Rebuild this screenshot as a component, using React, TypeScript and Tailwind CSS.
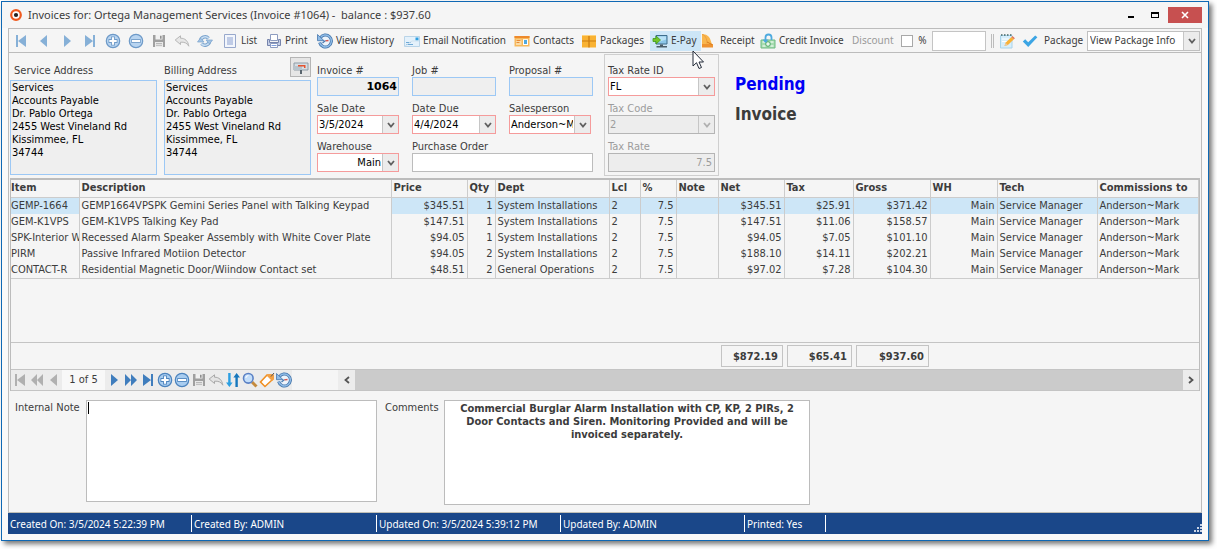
import type { ReactNode } from "react";

type IconName =
  | "first" | "prevPage" | "prev" | "next" | "nextPage" | "last" | "plus" | "minus" | "save" | "undo"
  | "refresh" | "list" | "print" | "history" | "mail" | "contacts" | "packages" | "epay" | "receipt"
  | "credit" | "edit" | "check" | "sort" | "search" | "tag" | "mailbox";

const icons: Record<IconName, ReactNode> = {
  first: <path d="M3 2h2v12H3zM13 2v12L5 8z" fill="currentColor" />,
  prevPage: <path d="M8 2v12L2 8zM14 2v12L8 8z" fill="currentColor" />,
  prev: <path d="M11 2v12L4 8z" fill="currentColor" />,
  next: <path d="M5 2v12l7-6z" fill="currentColor" />,
  nextPage: <path d="M2 2v12l6-6zM8 2v12l6-6z" fill="currentColor" />,
  last: <path d="M3 2v12l8-6zM11 2h2v12h-2z" fill="currentColor" />,
  plus: (
    <>
      <circle cx="8" cy="8" r="6.7" fill="#a9cdf0" stroke="#4c83bd" strokeWidth="1.2" />
      <path d="M8 3.5v9M3.5 8h9" stroke="#4c83bd" strokeWidth="4" />
      <path d="M8 4.3v7.4M4.3 8h7.4" stroke="#fff" strokeWidth="2.2" />
    </>
  ),
  minus: (
    <>
      <circle cx="8" cy="8" r="6.7" fill="#a9cdf0" stroke="#4c83bd" strokeWidth="1.2" />
      <path d="M3.3 8h9.4" stroke="#4c83bd" strokeWidth="4" />
      <path d="M4 8h8" stroke="#fff" strokeWidth="2.2" />
    </>
  ),
  save: (
    <>
      <path d="M2 2h12v12H2z" fill="#8c8c8c" />
      <path d="M4.5 2h7v4.5h-7z" fill="#f2f2f2" />
      <path d="M9 2.8h1.6v3H9z" fill="#777" />
      <path d="M4 9h8v5H4z" fill="#e8e8e8" />
      <path d="M5 10.5h6M5 12.3h6" stroke="#aaa" />
    </>
  ),
  undo: <path d="M1.2 7 6.5 2.8v2.4c4.5 0 7.5 2.6 8.3 8-1.6-3.2-4.4-4.3-8.3-4v2.3z" fill="#e4e4e4" stroke="#a8a8a8" />,
  refresh: (
    <>
      <path d="M3.5 8.500a4.600 4.600 0 0 1 8-3.200M12.500 7.500a4.600 4.600 0 0 1-8 3.200" fill="none" stroke="#5b8fc4" strokeWidth="3.400" />
      <path d="M3.500 8.500a4.600 4.600 0 0 1 8-3.200M12.500 7.500a4.600 4.600 0 0 1-8 3.200" fill="none" stroke="#c3dcf4" strokeWidth="1.600" />
      <path d="M9 7l6.500 0L12.500 11zM7 9H.500L3.500 5z" fill="#8fb8e0" stroke="#5b8fc4" strokeWidth=".7" />
    </>
  ),
  list: (
    <>
      <path d="M2.500 1.500h11v13h-11z" fill="#f3f6fc" stroke="#98a8cc" />
      <path d="M5 5h6M5 7h6M5 9h6M5 11h6" stroke="#8ba0d0" />
    </>
  ),
  print: (
    <>
      <path d="M4.500 1.500h7v6h-7z" fill="#fff" stroke="#8d9cc0" />
      <path d="M1.500 6.500h2v3h9v-3h2v6h-13z" fill="#c4cee6" stroke="#7684ac" />
      <path d="M4.500 10.500h7v4h-7z" fill="#fff" stroke="#8d9cc0" />
      <path d="M5.500 12.500h5" stroke="#7d9fe0" />
    </>
  ),
  history: (
    <>
      <path d="M3.200 5a6 6 0 1 1-.6 4.500" fill="#edf4fb" stroke="#4576ac" strokeWidth="3" />
      <path d="M3.200 5a6 6 0 1 1-.6 4.500" fill="none" stroke="#8fbbe6" strokeWidth="1.400" />
      <path d="M.500 1.500v6.200h6.500z" fill="#8fbbe6" stroke="#4576ac" strokeWidth=".8" />
      <path d="M5.500 10l3-2.500" fill="none" stroke="#4779b0" strokeWidth="1.200" />
      <path d="M8.500 7.800l3-.300" stroke="#d9534a" strokeWidth="1.300" />
    </>
  ),
  mail: (
    <>
      <path d="M.500 3.500h15v10H.500z" fill="#e4f1fb" stroke="#b9d4e8" />
      <path d="M11.500 4.500h3v3h-3z" fill="#2f9fe0" />
      <path d="M2 9.500h5M2 11.500h7" stroke="#6fa9d6" />
      <path d="M1 13l7-5h7" fill="none" stroke="#cfe2ef" />
    </>
  ),
  contacts: (
    <>
      <path d="M.500 3h15v10.500H.500z" fill="#f7b95c" />
      <path d="M.500 3h15v2H.500z" fill="#ee8a2c" />
      <path d="M2 6.500h5.500v5.500H2z" fill="#fbdca6" />
      <path d="M2.500 7.500h4M2.500 9.500h3" stroke="#e98b38" />
      <path d="M9 6.200h5V12H9z" fill="#fff" />
      <path d="M10 7h3v4h-3z" fill="#4fa9e0" />
    </>
  ),
  packages: (
    <>
      <path d="M1 2h14v12.500H1z" fill="#f9b233" />
      <path d="M1 8h14M8 2v12.500" stroke="#c97a10" strokeWidth="1.200" />
      <path d="M1 2.500h14" stroke="#ffd37c" />
    </>
  ),
  epay: (
    <>
      <path d="M4 2.500h11v8.500H4z" fill="#8cc6e8" stroke="#3f6d8c" />
      <path d="M5 3.500h9v3l-9 3z" fill="#b9e1f6" />
      <path d="M8 11.500h3V13H8zM4.500 13h10.500v1.500H4.500z" fill="#4b5d68" />
      <path d="M1 5.500h3V3l4.500 4L4 11V8.500H1z" fill="#74c52a" stroke="#3d9c16" strokeWidth=".8" />
    </>
  ),
  receipt: (
    <>
      <path d="M1 1.500c4-1 8 2 9 7l1 3H1z" fill="#f9b64e" />
      <path d="M1 1.500c3 0 5 4 5 9" fill="none" stroke="#eda040" />
      <path d="M1 11h11v3.500H1z" fill="#ee9331" />
      <path d="M6 9l5 2.500" stroke="#d67b1f" />
    </>
  ),
  credit: (
    <>
      <path d="M1 7h14v8H1z" fill="#a6dcb0" stroke="#6fbb82" />
      <path d="M2.500 9h3M10.500 9h3M2.500 13h3M10.500 13h3" stroke="#fff" />
      <circle cx="8" cy="11" r="2.300" fill="#e9f8ec" stroke="#4fa768" />
      <path d="M5.500 9V4.500a3 3 0 0 1 6 0V7" fill="none" stroke="#4daadf" strokeWidth="1.800" />
      <path d="M2.500 6.500h6L5.500 10z" fill="#4daadf" />
    </>
  ),
  edit: (
    <>
      <path d="M1.500 2.500h11.500v12.500H1.500z" fill="#d6eefb" stroke="#a9d4ea" />
      <path d="M2 2h1.500M5 2h1.500M8 2h1.500M11 2h1.500" stroke="#466" strokeWidth="1.600" />
      <path d="M3 6h7M3 8.500h5" stroke="#fff" />
      <path d="M5.500 13l1-3.200L12.500 4l2.400 2.300-6 5.800z" fill="#f9b237" />
      <path d="M12.500 4l1-1 2.400 2.300-1 1z" fill="#e36f51" />
      <path d="M5.500 13l1-3.200 2.400 2.300z" fill="#e9c9a0" />
    </>
  ),
  check: <path d="M.800 8.500l2.400-2.300 3 3L13.200 2.500l2.200 1.700L6.200 14z" fill="#3ca5e4" />,
  sort: (
    <>
      <path d="M3.200 1h2.400v9.500h2L4.400 15 1 10.500h2.200z" fill="#2b9fe2" />
      <path d="M10.400 15h2.400V5.500h2.200L11.600 1 8.400 5.500h2z" fill="#1677bd" />
    </>
  ),
  search: (
    <>
      <path d="M10 10l4.500 4.500" stroke="#c48a3d" strokeWidth="3" />
      <circle cx="6.300" cy="6.300" r="4.800" fill="#c3defa" stroke="#5a80c4" strokeWidth="1.600" />
      <path d="M3.800 6a2.600 2.600 0 0 1 2.600-2.400" fill="none" stroke="#fff" />
    </>
  ),
  tag: (
    <>
      <path d="M1.500 10L8 3h5v5l-7 6.500z" fill="#fff" stroke="#ef8f22" strokeWidth="1.600" />
      <path d="M9 2.500h6v5l-2 1.500-5-5z" fill="#f3a043" />
      <path d="M12 4.500l3-3.500" stroke="#555" />
    </>
  ),
  mailbox: (
    <>
      <path d="M1 4h14v7H1z" fill="#d5dde3" stroke="#8f9ca6" />
      <path d="M1 7h8v4H1z" fill="#b7c4cd" />
      <path d="M5 6h7.500v3H11V7.500H5z" fill="#e5532e" />
      <path d="M7 11h2v4H7z" fill="#59656e" />
    </>
  ),
};

function Icon({ name, className = "" }: { name: IconName; className?: string }) {
  return (
    <svg viewBox="0 0 16 16" className={`size-4 shrink-0 ${className}`} aria-hidden="true">
      {icons[name]}
    </svg>
  );
}

function Chevron() {
  return (
    <svg viewBox="0 0 8 8" className="size-2" aria-hidden="true">
      <path d="M1 2l3 3.500L7 2" fill="none" stroke="currentColor" strokeWidth="1.800" />
    </svg>
  );
}

const navButtons: [IconName, string][] = [
  ["first", "First"], ["prev", "Previous"], ["next", "Next"], ["last", "Last"],
  ["plus", "Add"], ["minus", "Delete"], ["save", "Save"], ["undo", "Undo"], ["refresh", "Refresh"],
];

const actions: { icon: IconName; label: string; width: string; active?: boolean }[] = [
  { icon: "list", label: "List", width: "w-[44px]" },
  { icon: "print", label: "Print", width: "w-[51px]" },
  { icon: "history", label: "View History", width: "w-[87px]" },
  { icon: "mail", label: "Email Notification", width: "w-[110px]" },
  { icon: "contacts", label: "Contacts", width: "w-[67px]" },
  { icon: "packages", label: "Packages", width: "w-[69px]" },
  { icon: "epay", label: "E-Pay", width: "w-[51px]", active: true },
  { icon: "receipt", label: "Receipt", width: "w-[59px]" },
  { icon: "credit", label: "Credit Invoice", width: "w-[92px]" },
];

const columns = [
  { label: "Item", width: "w-[68px]" },
  { label: "Description", width: "w-[312px]" },
  { label: "Price", width: "w-[76px]", right: true },
  { label: "Qty", width: "w-[28px]", right: true },
  { label: "Dept", width: "w-[114px]" },
  { label: "Lcl", width: "w-[31px]" },
  { label: "%", width: "w-[36px]", right: true },
  { label: "Note", width: "w-[42px]" },
  { label: "Net", width: "w-[66px]", right: true },
  { label: "Tax", width: "w-[69px]", right: true },
  { label: "Gross", width: "w-[77px]", right: true },
  { label: "WH", width: "w-[67px]", right: true },
  { label: "Tech", width: "w-[100px]" },
  { label: "Commissions to", width: "" },
];

const rows = [
  ["GEMP-1664", "GEMP1664VPSPK Gemini Series Panel with Talking Keypad", "$345.51", "1", "System Installations", "2", "7.5", "", "$345.51", "$25.91", "$371.42", "Main", "Service Manager", "Anderson~Mark"],
  ["GEM-K1VPS", "GEM-K1VPS Talking Key Pad", "$147.51", "1", "System Installations", "2", "7.5", "", "$147.51", "$11.06", "$158.57", "Main", "Service Manager", "Anderson~Mark"],
  ["SPK-Interior W", "Recessed Alarm Speaker Assembly with White Cover Plate", "$94.05", "1", "System Installations", "2", "7.5", "", "$94.05", "$7.05", "$101.10", "Main", "Service Manager", "Anderson~Mark"],
  ["PIRM", "Passive Infrared Motiion Detector", "$94.05", "2", "System Installations", "2", "7.5", "", "$188.10", "$14.11", "$202.21", "Main", "Service Manager", "Anderson~Mark"],
  ["CONTACT-R", "Residential Magnetic Door/Wiindow Contact set", "$48.51", "2", "General Operations", "2", "7.5", "", "$97.02", "$7.28", "$104.30", "Main", "Service Manager", "Anderson~Mark"],
];

const address = "Services\nAccounts Payable\nDr. Pablo Ortega\n2455 West Vineland Rd\nKissimmee, FL\n34744";

const status = [
  { text: "Created On: 3/5/2024 5:22:39 PM", width: "w-[184px]" },
  { text: "Created By: ADMIN", width: "w-[185px]" },
  { text: "Updated On: 3/5/2024 5:39:12 PM", width: "w-[184px]" },
  { text: "Updated By: ADMIN", width: "w-[184px]" },
  { text: "Printed: Yes", width: "w-[81px]" },
];

const pagerLeft: [IconName, string][] = [["first", "First row"], ["prevPage", "Previous page"], ["prev", "Previous row"]];
const pagerRight: [IconName, string, string][] = [
  ["next", "Next row", "text-[#3f7dbd]"],
  ["nextPage", "Next page", "text-[#3f7dbd]"],
  ["last", "Last row", "text-[#3f7dbd]"],
  ["plus", "Add row", ""],
  ["minus", "Delete row", ""],
  ["save", "Save row", "opacity-80"],
  ["undo", "Undo row", ""],
  ["sort", "Sort", ""],
  ["search", "Search", ""],
  ["tag", "Clear filter", ""],
  ["history", "Row history", ""],
];

function Field({ id, label, children, className = "" }: { id: string; label: string; children: ReactNode; className?: string }) {
  return (
    <div className={`flex flex-col ${className}`}>
      <label htmlFor={id} className="h-[15px] leading-[17px] whitespace-nowrap">{label}</label>
      {children}
    </div>
  );
}

function Select({ id, value, className = "", right, disabled }: { id: string; value: string; className?: string; right?: boolean; disabled?: boolean }) {
  return (
    <div className={`flex h-[19px] border ${disabled ? "border-[#b5b5b5] bg-[#ededed] text-[#9c9c9c]" : "border-[#f59b9b] bg-white text-black"} ${className}`}>
      <select id={id} disabled={disabled} className={`min-w-0 flex-1 appearance-none px-px pt-px opacity-100 outline-none ${right ? "text-right" : ""}`}>
        <option>{value}</option>
      </select>
      <span className={`pointer-events-none flex w-4 shrink-0 items-center justify-center border-l border-[#c6c6c6] bg-[#ececec] ${disabled ? "text-[#b0b0b0]" : "text-[#606060]"}`}>
        <Chevron />
      </span>
    </div>
  );
}

export default function App() {
  return (
    <div className="bg-white pt-px pr-2 pb-2 pl-px font-['DejaVu_Sans_Condensed','DejaVu_Sans',sans-serif] text-[11px] text-[#3c3c3c]">
      <div className="border border-[#0f68b4] bg-[#f9f9f9] shadow-[3px_3px_5px_#777]">
        <header className="flex h-[26px] items-center bg-[#f5f5f5] pl-2 font-['Noto_Sans',sans-serif]">
          <svg viewBox="0 0 12 12" className="mr-1.5 size-3 shrink-0" aria-hidden="true">
            <circle cx="6" cy="6" r="4.800" fill="#fff" stroke="#f05a1e" strokeWidth="2.200" />
            <circle cx="6" cy="6" r="2.100" fill="#222" />
          </svg>
          <h1 className="flex-1 whitespace-pre">Invoices for: Ortega Management Services (Invoice #1064) -  balance : $937.60</h1>
          <button aria-label="Minimize" className="flex h-4 w-6 items-center justify-center">
            <span className="mt-1 h-0.5 w-1.5 bg-black" />
          </button>
          <button aria-label="Maximize" className="flex h-4 w-6 items-center justify-center">
            <span className="h-1.5 w-2 border border-t-2 border-black" />
          </button>
          <button aria-label="Close" className="mr-1.5 ml-px flex h-4 w-[34px] items-center justify-center bg-[#c75050]">
            <svg viewBox="0 0 8 8" className="size-2" aria-hidden="true">
              <path d="M1 1l6 6M7 1L1 7" stroke="#fff" strokeWidth="1.600" />
            </svg>
          </button>
        </header>

        <main className="mx-1.5 border-x border-t border-[#bcbcbc] bg-[#f5f5f5]">
          {/* Toolbar */}
          <div className="flex h-6 items-center border-b border-[#bcbcbc] font-['Noto_Sans',sans-serif] text-[10px]">
            {navButtons.map(([icon, label]) => (
              <button key={label} aria-label={label} className="flex w-[23px] shrink-0 justify-center text-[#6b9fd0] opacity-80">
                <Icon name={icon} />
              </button>
            ))}
            <span className="w-[6px]" />
            {actions.map(a => (
              <button
                key={a.label}
                className={`relative flex h-5 shrink-0 items-center gap-[3px] whitespace-nowrap ${a.width} ${a.active ? "bg-[#cde6f7] pl-0.5" : ""}`}
              >
                <Icon name={a.icon} />
                {a.label}
                {a.active && (
                  <svg viewBox="0 0 12 20" className="absolute top-[19px] left-[42px] z-10 h-5 w-3" aria-hidden="true">
                    <path d="M1 1v15l3.500-3.300L7 18.500l2.500-1L7 12h4.500z" fill="#fff" stroke="#222a38" />
                  </svg>
                )}
              </button>
            ))}
            <label htmlFor="discount" className="w-[49px] text-[#9a9a9a]">Discount</label>
            <input id="discount" type="checkbox" className="size-3 shrink-0 appearance-none border border-[#a8a8a8] bg-white" />
            <label htmlFor="pct" className="w-[19px] text-center">%</label>
            <input id="pct" className="h-5 w-[54px] border border-[#c4c4c4] bg-white px-1 outline-none" />
            <span className="mr-px ml-[5px] h-3.5 w-[3px] border-x border-[#bcbcbc]" />
            <button aria-label="Edit note" className="flex w-[23px] justify-center"><Icon name="edit" /></button>
            <button aria-label="Approve" className="flex w-[23px] justify-center"><Icon name="check" /></button>
            <label htmlFor="package" className="ml-auto w-[43px]">Package</label>
            <div className="mr-px flex h-5 w-[113px] shrink-0 border border-[#c0c0c0] bg-white">
              <select id="package" className="min-w-0 flex-1 appearance-none px-0.5 outline-none">
                <option>View Package Info</option>
              </select>
              <span className="pointer-events-none flex w-4 items-center justify-center border-l border-[#c6c6c6] bg-[#ececec] text-[#606060]"><Chevron /></span>
            </div>
          </div>

          {/* Invoice header */}
          <div className="flex h-[125px] items-start pl-px">
            <div className="w-[154px] pt-[9px]">
              <label htmlFor="service" className="block h-[18px] pl-1 leading-[17px]">Service Address</label>
              <textarea id="service" readOnly defaultValue={address} className="block h-[95px] w-[147px] resize-none border border-[#9cc8f5] bg-[#efefef] px-px text-black outline-none leading-[13px]" />
            </div>
            <div className="relative w-[153px] pt-[9px]">
              <label htmlFor="billing" className="block h-[18px] leading-[17px]">Billing Address</label>
              <button aria-label="Print envelope" className="absolute top-1 right-1.5 flex h-5 w-[21px] items-center justify-center border border-[#b5b5b5] bg-[#e6e6e6]">
                <Icon name="mailbox" />
              </button>
              <textarea id="billing" readOnly defaultValue={address} className="block h-[95px] w-[147px] resize-none border border-[#9cc8f5] bg-[#efefef] px-px text-black outline-none leading-[13px]" />
            </div>
            <div className="grid grid-cols-[82px_84px_84px] gap-x-[13px] gap-y-1 pt-[9px]">
              <Field id="invoice" label="Invoice #">
                <input id="invoice" readOnly defaultValue="1064" className="h-[19px] w-full border border-[#9cc8f5] bg-[#efefef] px-px text-right font-['DejaVu_Sans',sans-serif] font-bold text-black outline-none" />
              </Field>
              <Field id="job" label="Job #">
                <input id="job" readOnly className="h-[19px] w-full border border-[#9cc8f5] bg-[#efefef] outline-none" />
              </Field>
              <Field id="proposal" label="Proposal #">
                <input id="proposal" readOnly className="h-[19px] w-full border border-[#9cc8f5] bg-[#efefef] outline-none" />
              </Field>
              <Field id="saleDate" label="Sale Date"><Select id="saleDate" value="3/5/2024" /></Field>
              <Field id="dateDue" label="Date Due"><Select id="dateDue" value="4/4/2024" /></Field>
              <Field id="salesperson" label="Salesperson"><Select id="salesperson" value="Anderson~Mark" className="mr-0.5" /></Field>
              <Field id="warehouse" label="Warehouse"><Select id="warehouse" value="Main" right /></Field>
              <Field id="po" label="Purchase Order" className="col-span-2">
                <input id="po" className="h-[19px] w-full border border-[#bcbcbc] bg-white px-1 outline-none" />
              </Field>
            </div>
            <div className="mt-px ml-[11px] flex h-[122px] w-[115px] flex-col gap-1 border border-[#cfcfcf] px-[3px] pt-[7px]">
              <Field id="taxRateId" label="Tax Rate ID"><Select id="taxRateId" value="FL" /></Field>
              <Field id="taxCode" label="Tax Code" className="text-[#9c9c9c]"><Select id="taxCode" value="2" disabled /></Field>
              <Field id="taxRate" label="Tax Rate" className="text-[#9c9c9c]">
                <input id="taxRate" disabled defaultValue="7.5" className="h-[19px] w-full border border-[#b5b5b5] bg-[#ededed] px-0.5 text-right" />
              </Field>
            </div>
            <div className="ml-4 pt-4 text-[17px] leading-[30px] font-bold">
              <p className="text-[#0000f5]">Pending</p>
              <p>Invoice</p>
            </div>
          </div>

          {/* Line items */}
          <div className="mx-px border-x border-t-2 border-[#bcbcbc]">
            <div className="h-[162px]">
              <table className="w-full table-fixed border-collapse">
                <thead>
                  <tr className="h-[17px]">
                    {columns.map((c, i) => (
                      <th key={c.label} scope="col" className={`overflow-hidden border-r border-b border-[#cccccc] p-0 text-left leading-4 font-bold whitespace-nowrap ${i === 0 ? "" : "pl-0.5"} ${c.width}`}>{c.label}</th>
                    ))}
                  </tr>
                </thead>
                <tbody>
                  {rows.map((row, r) => (
                    <tr key={row[0]} className={`h-4 ${r === 0 ? "bg-[#cde6f7]" : ""} ${r === rows.length - 1 ? "border-b border-[#cccccc]" : ""}`}>
                      {row.map((cell, i) => (
                        <td
                          key={columns[i].label}
                          className={`overflow-hidden border-r border-[#cccccc] p-0 leading-4 whitespace-nowrap ${columns[i].right ? "pr-0.5 text-right" : i === 0 ? "" : "pl-0.5"} ${i === 1 ? "bg-[#f5f5f5]" : ""}`}
                        >
                          {cell}
                        </td>
                      ))}
                    </tr>
                  ))}
                </tbody>
              </table>
            </div>
            <div className="flex h-7 items-center gap-1 border-y border-[#c4c4c4] pl-[710px] text-right font-bold">
              <output className="h-[22px] w-[62px] border border-[#c4c4c4] pr-1 leading-[22px]">$872.19</output>
              <output className="h-[22px] w-[65px] border border-[#c4c4c4] pr-1 leading-[22px]">$65.41</output>
              <output className="h-[22px] w-[73px] border border-[#c4c4c4] pr-1 leading-[22px]">$937.60</output>
            </div>
            <div className="flex h-[21px] items-center border-b border-[#c4c4c4] bg-[#ececec]">
              {pagerLeft.map(([icon, label]) => (
                <button key={label} disabled aria-label={label} className="flex w-[17px] justify-center text-[#b0b0b0]"><Icon name={icon} /></button>
              ))}
              <span className="flex h-full w-[43px] items-center justify-center bg-[#f8f8f8]">1 of 5</span>
              {pagerRight.map(([icon, label, tone]) => (
                <button key={label} aria-label={label} className={`flex w-[17px] justify-center ${tone}`}><Icon name={icon} /></button>
              ))}
              <span className="h-full w-[46px] bg-[#f5f5f5]" />
              <button aria-label="Scroll left" className="flex h-full w-[17px] items-center justify-center text-[#555]"><span className="rotate-90"><Chevron /></span></button>
              <span className="h-full flex-1 bg-[#cbcbcb]" />
              <button aria-label="Scroll right" className="flex h-full w-4 items-center justify-center text-[#555]"><span className="-rotate-90"><Chevron /></span></button>
            </div>
          </div>

          {/* Notes */}
          <div className="flex h-[122px] items-start border-b border-[#c0bfb6] pt-[9px] pl-1.5">
            <label htmlFor="internalNote" className="w-[71px] whitespace-nowrap leading-4">Internal Note</label>
            <div className="relative">
              <textarea id="internalNote" className="block h-[102px] w-[291px] resize-none border border-[#bcbcbc] bg-white p-0.5 outline-none" />
              <span className="absolute top-0.5 left-0.5 h-3 w-px bg-black" />
            </div>
            <label htmlFor="comments" className="ml-2 w-[59px] leading-4">Comments</label>
            <textarea
              id="comments"
              defaultValue="Commercial Burglar Alarm Installation with CP, KP, 2 PIRs, 2 Door Contacts and Siren. Monitoring Provided and will be invoiced separately."
              className="block h-[105px] w-[366px] resize-none border border-[#bcbcbc] bg-white px-3 py-px text-center font-bold outline-none leading-[13px]"
            />
          </div>
        </main>

        <footer className="relative mx-1.5 mb-1.5 flex h-[21px] items-center bg-[#1a4789] font-['Noto_Sans',sans-serif] text-[10px] text-white">
          {status.map(s => (
            <span key={s.text} className={`h-[17px] shrink-0 border-r border-white pl-0.5 leading-[18px] whitespace-nowrap ${s.width}`}>{s.text}</span>
          ))}
          <svg viewBox="0 0 8 8" className="absolute right-0 bottom-0.5 size-2" aria-hidden="true">
            <path d="M6 0h2v2H6zM3 3h2v2H3zM6 3h2v2H6zM0 6h2v2H0zM3 6h2v2H3zM6 6h2v2H6z" fill="#c9d4e5" />
          </svg>
        </footer>
      </div>
    </div>
  );
}
